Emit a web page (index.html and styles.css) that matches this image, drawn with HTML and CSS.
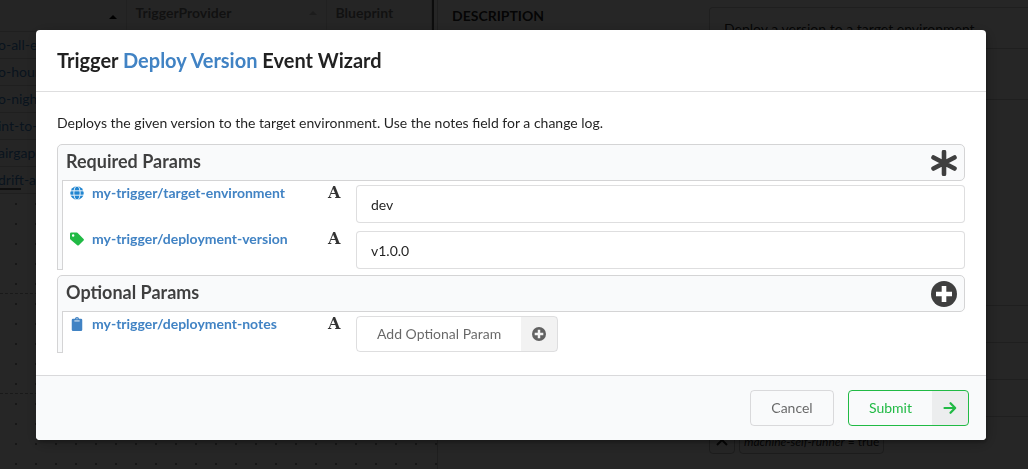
FILE: index.html
```html
<!DOCTYPE html>
<html lang="en">
<head>
    <meta charset="UTF-8">
    <meta name="viewport" content="width=device-width, initial-scale=1">
    <title>Trigger Deploy Version Event Wizard</title>
    <link rel="stylesheet" href="styles.css">
</head>
<body>

    <!-- page behind the wizard -->
    <div class="page" inert>
        <div class="left-pane">
            <div class="grid-holder">
                <table class="trigger-grid">
                    <thead>
                        <tr>
                            <th class="col-name"><span class="sort active"></span></th>
                            <th class="col-provider">TriggerProvider<span class="sort"></span></th>
                            <th>Blueprint</th>
                        </tr>
                    </thead>
                    <tbody>
                        <tr><td><a href="#">o-all-e</a></td><td></td><td></td></tr>
                        <tr><td><a href="#">o-hour</a></td><td></td><td></td></tr>
                        <tr><td><a href="#">o-nigh</a></td><td></td><td></td></tr>
                        <tr><td><a href="#">int-to-</a></td><td></td><td></td></tr>
                        <tr><td><a href="#">airgap-</a></td><td></td><td></td></tr>
                        <tr><td><a href="#">drift-a</a></td><td></td><td></td></tr>
                    </tbody>
                </table>
                <div class="scroll-thumb"></div>
            </div>
            <div class="graph">
                <div class="lane"></div>
                <div class="lane"></div>
                <div class="lane"></div>
            </div>
        </div>
        <div class="detail-pane">
            <div class="detail-row description">
                <h4>DESCRIPTION</h4>
                <div class="segment">Deploy a version to a target environment.</div>
            </div>
            <div class="detail-row blank"></div>
            <div class="detail-row"></div>
            <div class="detail-row"></div>
            <div class="detail-row"></div>
            <div class="detail-row selectors">
                <div class="tags">
                    <span class="tag">
                        <svg width="16" height="14" viewBox="0 0 16 14"><path d="M3 10l5-5 5 5" fill="none" stroke="currentColor" stroke-width="2"/></svg>
                    </span>
                    <span class="tag"><em>machine-self-runner</em> = true</span>
                </div>
            </div>
        </div>
    </div>

    <div class="dimmer">
        <form class="modal" role="dialog" aria-labelledby="wizard-title">
            <h2 class="modal-header" id="wizard-title">Trigger <a href="#">Deploy Version</a> Event Wizard</h2>

            <div class="modal-content">
                <p class="intro">Deploys the given version to the target environment. Use the notes field for a change log.</p>

                <section class="params">
                    <div class="params-header">
                        <h3>Required Params</h3>
                        <svg class="params-icon" viewBox="0 0 26 26"><path d="M13 2v22M2.500 7.500l21 11M23.500 7.500l-21 11" fill="none" stroke="currentColor" stroke-width="4.600" stroke-linecap="round"/></svg>
                    </div>
                    <div class="params-body">
                        <div class="spine"></div>
                        <div class="params-list">
                            <div class="param">
                                <svg class="param-icon globe" viewBox="0 0 16 16">
                                    <circle cx="8" cy="8" r="7.700" fill="currentColor"/>
                                    <g fill="none" stroke="#fff" stroke-width="1"><ellipse cx="8" cy="8" rx="3.600" ry="8"/><path d="M0 5.500h16M0 10.500h16"/></g>
                                </svg>
                                <label for="target-environment">my-trigger/target-environment</label>
                                <span class="type" title="string">A</span>
                                <input type="text" id="target-environment" value="dev">
                            </div>
                            <div class="param">
                                <svg class="param-icon tag-icon" viewBox="0 0 16 16"><path fill="currentColor" fill-rule="evenodd" d="M0 2Q0 .5 1.500 .5h6q.6 0 1 .4l7 7q.8.800 0 1.700l-5.500 5.500q-.9.800-1.700 0L.5 8.500Q0 8 0 7.400zM3.600 2.700a1.400 1.400 0 1 0 0 2.800 1.400 1.400 0 1 0 0-2.800z"/></svg>
                                <label for="deployment-version">my-trigger/deployment-version</label>
                                <span class="type" title="string">A</span>
                                <input type="text" id="deployment-version" value="v1.0.0">
                            </div>
                        </div>
                    </div>
                </section>

                <section class="params">
                    <div class="params-header">
                        <h3>Optional Params</h3>
                        <svg class="params-icon" viewBox="0 0 26 26"><circle cx="13" cy="13" r="13" fill="currentColor"/><path d="M13 5v16M5 13h16" stroke="#fff" stroke-width="4.600"/></svg>
                    </div>
                    <div class="params-body">
                        <div class="spine"></div>
                        <div class="params-list">
                            <div class="param">
                                <svg class="param-icon clipboard" viewBox="0 0 16 16"><path fill="currentColor" d="M3.500 2H5.700a2.300 2 0 0 1 4.600 0h2.200Q14 2 14 3.500v11q0 1.500-1.500 1.500h-9Q2 16 2 14.500v-11Q2 2 3.500 2z"/><path d="M5 4.500h6" stroke="#fff" stroke-width="1"/><circle cx="8" cy="2" r=".7" fill="#fff"/></svg>
                                <span class="param-name">my-trigger/deployment-notes</span>
                                <span class="type" title="string">A</span>
                                <button type="button" class="btn labeled">
                                    <span class="btn-text">Add Optional Param</span>
                                    <span class="btn-icon"><svg width="14" height="14" viewBox="0 0 26 26"><circle cx="13" cy="13" r="13" fill="currentColor"/><path d="M13 5v16M5 13h16" stroke="#f2f2f2" stroke-width="4.600"/></svg></span>
                                </button>
                            </div>
                        </div>
                    </div>
                </section>
            </div>

            <div class="modal-actions">
                <button type="button" class="btn cancel">Cancel</button>
                <button type="submit" class="btn labeled green">
                    <span class="btn-text">Submit</span>
                    <span class="btn-icon"><svg width="14" height="14" viewBox="0 0 14 14"><path d="M1.500 7H12M7.500 2.200L12.200 7l-4.700 4.800" fill="none" stroke="currentColor" stroke-width="2.200" stroke-linecap="round" stroke-linejoin="round"/></svg></span>
                </button>
            </div>
        </form>
    </div>

</body>
</html>
```

FILE: styles.css
```css
* {
    box-sizing: border-box;
}

body {
    margin: 0;
    height: 100vh;
    overflow: hidden;
    font-family: Lato, "Liberation Sans", sans-serif;
    font-size: 14px;
    line-height: 20px;
    color: rgba(0, 0, 0, 0.87);
    background: #fff;
}

a {
    color: #4183c4;
    text-decoration: none;
}

h2, h3, h4, p {
    margin: 0;
}

/* page behind the wizard */
.page {
    display: flex;
    height: 100%;
}

.left-pane {
    display: flex;
    flex-direction: column;
    flex: 0 0 437px;
}

.grid-holder {
    position: relative;
    margin-right: 3px;
    border-right: 2px solid #555;
}

.trigger-grid {
    width: 100%;
    table-layout: fixed;
    border-collapse: collapse;
}

.trigger-grid th {
    height: 31px;
    padding: 0 9px 4px;
    border-right: 1px solid #ddd;
    border-bottom: 1px solid #ccc;
    background: #f5f5f5;
    color: rgba(0, 0, 0, 0.54);
    font-weight: 700;
    text-align: left;
}

.trigger-grid td {
    height: 27px;
    padding: 0;
    border-bottom: 1px solid #ccc;
    background: #f9f9f9;
}

.trigger-grid td a {
    margin-left: -2px;
}

.col-name {
    width: 126px;
}

.col-provider {
    width: 200px;
}

.sort {
    float: right;
    margin-top: 8px;
    border: 4px solid transparent;
    border-top: 0;
    border-bottom: 4px solid #bbb;
}

.sort.active {
    border-bottom-color: #000;
}

/* horizontal scrollbar, lies over the last row */
.scroll-thumb {
    position: absolute;
    left: 0;
    bottom: 4px;
    width: 21px;
    height: 2px;
    background: #666;
}

.graph {
    flex: 1;
    overflow: hidden;
    background: radial-gradient(circle, #999 1px, transparent 1px) 6px 0 / 20px 20px;
}

.lane {
    height: 100px;
    border-bottom: 1px dashed #aaa;
}

.detail-pane {
    flex: 1;
    border-left: 1px solid #ccc;
}

.detail-row {
    height: 37px;
    border-bottom: 1px solid #ccc;
}

.detail-row.description {
    display: grid;
    grid-template-columns: 257px 1fr;
    height: 100px;
    padding: 7px 0 0 14px;
}

.detail-row.blank {
    height: 206px;
}

.description h4 {
    font-size: 14px;
    line-height: 17px;
}

.segment {
    height: 42px;
    padding: 11px 14px;
    border: 1px solid #ccc;
    border-right: 0;
    border-radius: 4px 0 0 4px;
}

.detail-row.selectors {
    height: auto;
    border-bottom: 0;
    padding: 12px 0 0 271px;
}

.tags {
    display: flex;
    gap: 4px;
}

.tag {
    display: flex;
    align-items: center;
    gap: 3px;
    height: 25px;
    padding: 0 4px;
    border: 1px solid #bbb;
    border-radius: 4px;
    font-size: 12px;
}

/* wizard */
.dimmer {
    position: fixed;
    inset: 0;
    display: flex;
    justify-content: center;
    align-items: flex-start;
    padding: 30px 6px 0 0;
    overflow: auto;
    background: rgba(0, 0, 0, 0.85);
}

.modal {
    width: 94%;
    max-width: 950px;
    background: #fff;
    border-radius: 4px;
    box-shadow: 1px 3px 3px rgba(0, 0, 0, 0.2), 1px 3px 15px 2px rgba(0, 0, 0, 0.2);
}

.modal-header {
    padding: 18px 21px;
    border-bottom: 1px solid rgba(34, 36, 38, 0.15);
    font-size: 20px;
    line-height: 25px;
    font-weight: 700;
}

.modal-content {
    padding: 21px 21px 22px;
}

.intro {
    margin-bottom: 11px;
}

.params + .params {
    margin-top: 5px;
}

.params-header {
    display: flex;
    justify-content: space-between;
    align-items: center;
    height: 37px;
    padding: 0 7px 0 8px;
    border: 1px solid #d4d4d5;
    border-radius: 5px 5px 5px 0;
    background: #f9fafb;
    color: rgba(0, 0, 0, 0.75);
}

.params-header h3 {
    padding-bottom: 3px;
    font-size: 18px;
    line-height: 24px;
    font-weight: 700;
}

.params-icon {
    width: 26px;
    height: 26px;
}

.params-body {
    display: flex;
}

/* open left edge that runs down beside the rows */
.spine {
    width: 6px;
    margin-top: -1px;
    border: 1px solid #d4d4d5;
    border-top: 0;
    background: #f9fafb;
}

.params-list {
    flex: 1;
    display: grid;
    gap: 8px;
    padding: 4px 0 1px 7px;
}

.param {
    display: grid;
    grid-template-columns: 14px 230px 21px 1fr;
    align-items: start;
    column-gap: 7px;
}

.param label,
.param-name {
    padding-left: 1px;
    line-height: 16px;
    font-weight: 700;
    color: #4183c4;
}

.param-icon {
    width: 14px;
    height: 14px;
    margin-top: 1px;
}

.globe {
    color: #2185d0;
}

.tag-icon {
    color: #21ba45;
}

.clipboard {
    color: #4183c4;
}

.type {
    font-family: "DejaVu Serif", serif;
    font-size: 16px;
    line-height: 16px;
    font-weight: 700;
    color: rgba(0, 0, 0, 0.8);
}

.param input {
    width: 100%;
    height: 38px;
    padding: 0 14px;
    border: 1px solid rgba(34, 36, 38, 0.15);
    border-radius: 4px;
    background: #fff;
    color: rgba(0, 0, 0, 0.87);
    font: inherit;
}

.btn {
    display: inline-flex;
    align-items: center;
    justify-content: center;
    justify-self: start;
    height: 36px;
    padding: 0 20px;
    border: 1px solid rgba(34, 36, 38, 0.15);
    border-radius: 4px;
    background: transparent;
    color: rgba(0, 0, 0, 0.6);
    font: inherit;
    cursor: pointer;
}

.btn.cancel {
    min-width: 84px;
}

.btn.labeled {
    padding: 0;
    overflow: hidden;
}

.btn-text {
    padding: 0 20px;
}

.btn-icon {
    display: flex;
    align-items: center;
    justify-content: center;
    width: 36px;
    height: 100%;
    background: rgba(0, 0, 0, 0.05);
}

.btn.green {
    border-color: #21ba45;
    color: #21ba45;
}

.modal-actions {
    display: flex;
    justify-content: flex-end;
    gap: 14px;
    padding: 14px 17px 14px 14px;
    border-top: 1px solid rgba(34, 36, 38, 0.15);
    border-radius: 0 0 4px 4px;
    background: #f9fafb;
}
```
